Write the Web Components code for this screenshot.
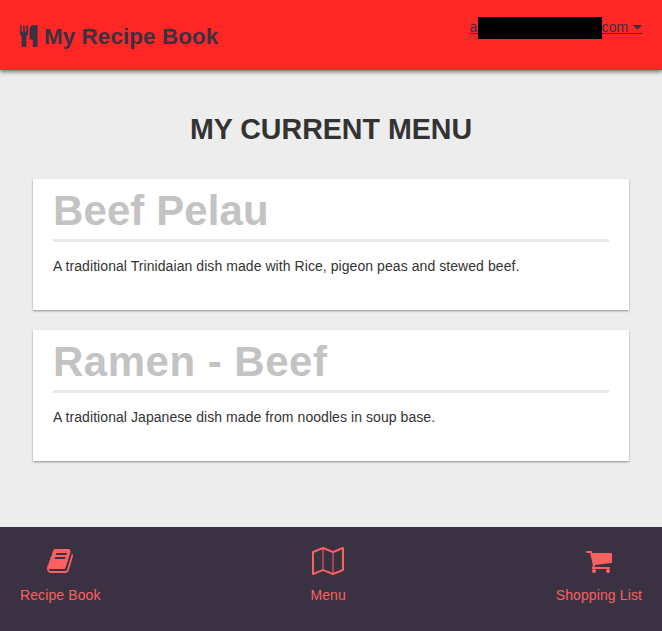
<!DOCTYPE html>
<html lang="en">
<head>
<meta charset="utf-8">
<title>My Recipe Book</title>
<style>
body{margin:0;background:#ededed;color:#333;font:14px/20px "Liberation Sans",Arial,sans-serif}
</style>
</head>
<body>
<recipe-app></recipe-app>
<script>
const ICONS={
cutlery:['0 64 1408 1792','M640 128v640q0 61-35.5 111t-92.5 70v779q0 52-38 90t-90 38h-128q-52 0-90-38t-38-90v-779q-57-20-92.5-70t-35.5-111v-640q0-26 19-45t45-19 45 19 19 45v416q0 26 19 45t45 19 45-19 19-45v-416q0-26 19-45t45-19 45 19 19 45v416q0 26 19 45t45 19 45-19 19-45v-416q0-26 19-45t45-19 45 19 19 45zm768 0v1600q0 52-38 90t-90 38h-128q-52 0-90-38t-38-90v-512h-224q-13 0-22.5-9.5t-9.5-22.5v-800q0-132 94-226t226-94h256q26 0 45 19t19 45z'],
book:['64 0 1664 1792','M1703 478q40 57 18 129l-275 906q-19 64-76.5 107.500t-122.500 43.500h-923q-77 0-148.500-53.500t-99.500-131.500q-24-67-2-127 0-4 3-27t4-37q1-8-3-21.500t-3-19.500q2-11 8-21t16.500-23.500 16.500-23.500q23-38 45-91.500t30-91.500q3-10 .5-30t-.5-28q3-11 17-28t17-23q21-36 42-92t25-90q1-9-2.500-32t.5-28q4-13 22-30.500t22-22.500q19-26 42.500-84.500t27.500-96.500q1-8-3-25.500t-2-26.500q2-8 9-18t18-23 17-21q8-12 16.500-30.500t15-35 16-36 19.500-32 26.500-23.500 36-11.500 47.500 5.500l-1 3q38-9 51-9h761q74 0 114 56t18 130l-274 906q-36 119-71.500 153.500t-128.500 34.500h-869q-27 0-38 15-11 16-1 43 24 70 144 70h923q29 0 56-15.500t35-41.500l300-987q7-22 5-57 38 15 59 43zm-1064 2q-4 13 2 22.500t20 9.500h608q13 0 25.500-9.500t16.500-22.500l21-64q4-13-2-22.500t-20-9.500h-608q-13 0-25.500 9.500t-16.500 22.500zm-83 256q-4 13 2 22.500t20 9.500h608q13 0 25.500-9.500t16.500-22.500l21-64q4-13-2-22.500t-20-9.500h-608q-13 0-25.500 9.500t-16.500 22.500z'],
map:['0 0 2048 1792','M2020 11q28 20 28 53v1408q0 20-11 36t-29 23l-640 256q-24 11-48 0l-616-246-616 246q-10 5-24 5-19 0-36-11-28-20-28-53v-1408q0-20 11-36t29-23l640-256q24-11 48 0l616 246 616-246q32-13 60 6zm-1284 135v1270l576 230v-1270zm-608 217v1270l544-217v-1270zm1792 1066v-1270l-544 217v1270z'],
cart:['64 0 1664 1792','M704 1536q0 52-38 90t-90 38-90-38-38-90 38-90 90-38 90 38 38 90zm896 0q0 52-38 90t-90 38-90-38-38-90 38-90 90-38 90 38 38 90zm128-1088v512q0 24-16.500 42.500t-40.500 21.500l-1044 122q13 60 13 70 0 16-24 64h920q26 0 45 19t19 45-19 45-45 19h-1024q-26 0-45-19t-19-45q0-11 8-31.500t16-36 21.500-40 15.500-29.500l-177-823h-204q-26 0-45-19t-19-45 19-45 45-19h256q16 0 28.500 6.500t19.500 15.500 13 24.500 8 26 5.500 29.500 4.500 26h1201q26 0 45 19t19 45z']
};
function define(name,html){
  const t=document.createElement('template');
  t.innerHTML=html;
  customElements.define(name,class extends HTMLElement{
    constructor(){super();this.attachShadow({mode:'open'}).append(t.content.cloneNode(true));}
  });
}
customElements.define('app-icon',class extends HTMLElement{
  connectedCallback(){
    if(this.shadowRoot)return;
    const [box,path]=ICONS[this.getAttribute('name')];
    this.attachShadow({mode:'open'}).innerHTML=`<style>:host{display:block;flex:none}svg{display:block;height:var(--icon-size,28px);width:auto}</style><svg viewBox="${box}" style="aspect-ratio:${box.split(' ').slice(2).join('/')}"><path fill="currentColor" d="${path}"/></svg>`;
  }
});
define('account-menu',`<style>
:host{display:block;color:#3a3242}
a{display:flex;align-items:center;height:20px;color:inherit;cursor:pointer;background:linear-gradient(currentColor,currentColor) 0 16px/100% 1px no-repeat}
.mask{width:124px;height:22px;background:#000;margin:1px 0 0}
i{width:9px;height:5px;margin:1px 0 0 4.6px;background:currentColor;clip-path:polygon(0 0,100% 0,50% 100%)}
</style><a><slot name="start"></slot><span class="mask"></span><slot name="end"></slot><i></i></a>`);
define('app-header',`<style>
:host{display:flex;justify-content:space-between;align-items:flex-start;box-sizing:border-box;height:70px;padding:17px 20px 0;background:#ff2626;box-shadow:0 2px 4px rgba(0,0,0,.5);color:#3a3242;position:relative}
h1{display:flex;align-items:center;gap:6.4px;margin:4px 0 0;height:30px;font-size:22.4px;line-height:30px;letter-spacing:.1px;--icon-size:22.4px}
h1 span{padding-top:1px}
</style><h1><app-icon name="cutlery"></app-icon><span><slot></slot></span></h1><slot name="account"></slot>`);
define('recipe-card',`<style>
:host{display:block;box-sizing:border-box;height:131px;padding:8px 20px 0;background:#fff;box-shadow:0 1px 2px rgba(0,0,0,.4)}
h2{margin:0;height:52px;border-bottom:3px solid #e7e7e7;font-size:42px;line-height:48px;letter-spacing:var(--title-spacing,.1px);color:#c3c3c3}
p{margin:14px 0 0;line-height:20px;letter-spacing:.066px;white-space:nowrap}
</style><h2><slot name="title"></slot></h2><p><slot></slot></p>`);
define('nav-item',`<style>
:host{display:flex;flex-direction:column;align-items:center;color:#fc6060}
span{margin-top:10px;line-height:20px;letter-spacing:.11px;white-space:nowrap}
</style><slot name="icon"></slot><span><slot></slot></span>`);
define('app-nav',`<style>
:host{display:flex;justify-content:space-between;align-items:flex-start;box-sizing:border-box;height:104px;padding:20px 20px 0;background:#3a3242}
</style><slot></slot>`);
define('recipe-app',`<style>
:host{display:flex;flex-direction:column;height:631px}
main{flex:1;padding:39px 33px 0}
.title{margin:0 0 30px;text-align:center;font-size:28.6px;line-height:40px}
.list{display:grid;gap:20px}
.wide{--title-spacing:.5px}
account-menu{letter-spacing:.15px}
</style>
<app-header>My Recipe Book<account-menu slot="account"><span slot="start">a</span><span slot="end">com</span></account-menu></app-header>
<main><h1 class="title">MY CURRENT MENU</h1><div class="list">
<recipe-card><span slot="title">Beef Pelau</span>A traditional Trinidaian dish made with Rice, pigeon peas and stewed beef.</recipe-card>
<recipe-card class="wide"><span slot="title">Ramen - Beef</span>A traditional Japanese dish made from noodles in soup base.</recipe-card>
</div></main>
<app-nav><nav-item><app-icon slot="icon" name="book"></app-icon>Recipe Book</nav-item><nav-item><app-icon slot="icon" name="map"></app-icon>Menu</nav-item><nav-item><app-icon slot="icon" name="cart"></app-icon>Shopping List</nav-item></app-nav>`);
</script>
</body>
</html>
